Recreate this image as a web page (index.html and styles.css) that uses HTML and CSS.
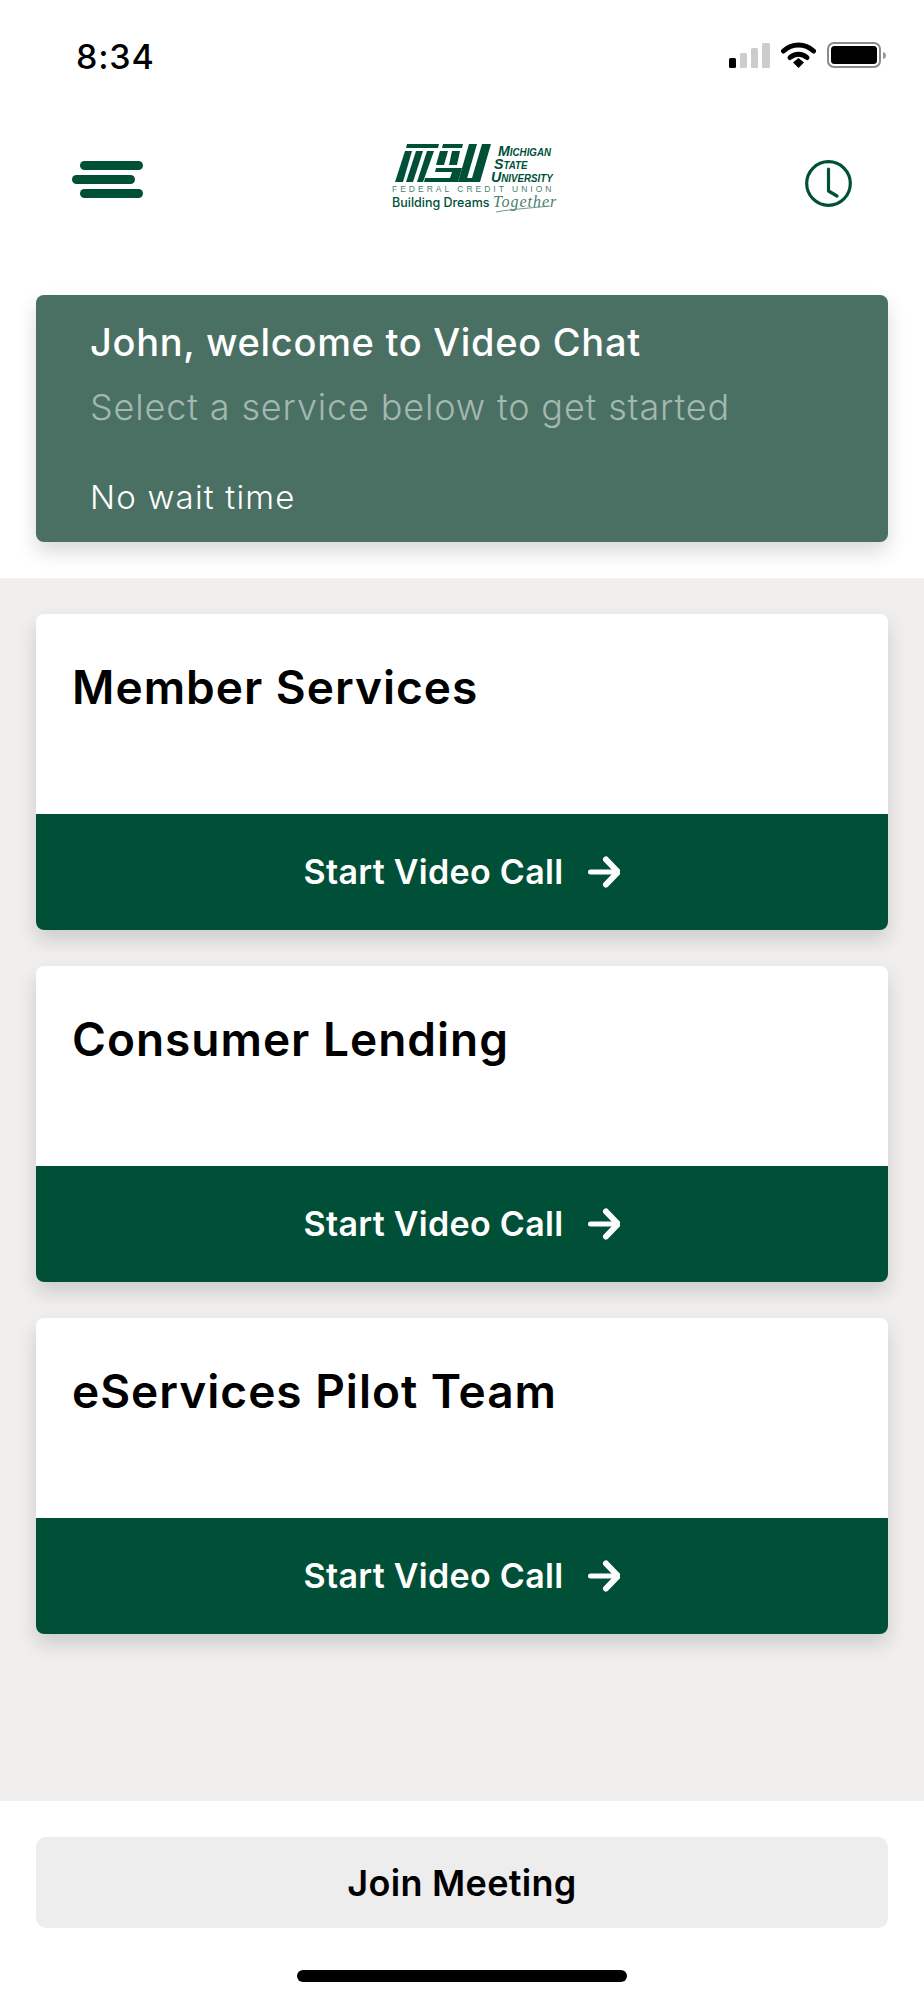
FILE: index.html
```html
<!DOCTYPE html>
<html lang="en">
<head>
    <meta charset="UTF-8">
    <meta name="viewport" content="width=device-width, initial-scale=1.0">
    <title>Video Chat</title>
    <link rel="stylesheet" href="styles.css">
</head>
<body>
    <div class="top">
        <div class="status-bar">
            <span class="time">8:34</span>
            <div class="status-icons">
                <svg width="41" height="26" viewBox="0 0 41 26">
                    <rect x="0" y="16" width="7" height="10" rx="1.5" fill="#000"/>
                    <rect x="11" y="11" width="7" height="15" rx="1.5" fill="#ccc"/>
                    <rect x="22" y="6" width="7" height="20" rx="1.5" fill="#ccc"/>
                    <rect x="33" y="1" width="8" height="25" rx="1.5" fill="#ccc"/>
                </svg>
                <svg class="wifi" width="35" height="26" viewBox="0 0 35 26">
                    <path d="M2.500 9C11 1 24 1 32.500 9" fill="none" stroke="#000" stroke-width="5" stroke-linecap="round"/>
                    <path d="M9 15.500C14 11 21 11 26 15.500" fill="none" stroke="#000" stroke-width="5" stroke-linecap="round"/>
                    <path d="M12 20.500L17.500 16L23 20.500L17.500 26Z" fill="#000"/>
                </svg>
                <svg class="battery" width="59" height="26" viewBox="0 0 59 26">
                    <rect x="1" y="1" width="52" height="24" rx="6" fill="none" stroke="#8a8a8a" stroke-width="2"/>
                    <rect x="4" y="4" width="46" height="18" rx="3.500" fill="#000"/>
                    <path d="M56 10C58 10.500 59 11.800 59 13.500C59 15.200 58 16.500 56 17Z" fill="#999"/>
                </svg>
            </div>
        </div>
        <div class="nav">
            <div class="menu-icon">
                <span class="menu-bar"></span>
                <span class="menu-bar shifted"></span>
                <span class="menu-bar"></span>
            </div>
            <svg class="logo" width="166" height="72" viewBox="0 0 166 72">
                <g fill="#005038">
                    <polygon points="15,0 47,0 46,4 14,4"/>
                    <polygon points="13,7 20,7 11,38 3,38"/>
                    <polygon points="24,7 31,7 21,38 14,38"/>
                    <polygon points="35,7 42,7 31,38 25,38"/>
                    <polygon points="51,0 71,0 70,4 50,4"/>
                    <polygon points="48,7 56,7 52,21 44,21"/>
                    <polygon points="44,24 70,24 66,38 32,38 33,34 58,34 60,28 43,28"/>
                    <polygon points="60,7 68,7 65,21 57,21"/>
                    <polygon points="77,0 85,0 74,38 66,38"/>
                    <polygon points="90,0 99,0 88,38 68,38 69,34 80,34"/>
                </g>
                <g fill="#005038" font-family="'Liberation Sans', sans-serif" font-weight="700" font-style="italic" font-size="15" font-variant="small-caps">
                    <text transform="translate(106 12) scale(.95 1)">Michigan</text>
                    <text transform="translate(102 24.500) scale(.95 1)">State</text>
                    <text transform="translate(99 37.500) scale(.95 1)">University</text>
                </g>
                <text x="0" y="48" fill="#4b7f6d" font-family="'Liberation Sans', sans-serif" font-size="8.500" letter-spacing="3">FEDERAL CREDIT UNION</text>
                <text x="0" y="63" fill="#005038" font-family="Inter, sans-serif" font-weight="500" font-size="12.500">Building Dreams</text>
                <text x="101" y="63" fill="#4b7f6d" font-family="'Liberation Serif', serif" font-style="italic" font-size="16" letter-spacing="1">Together</text>
                <path d="M104 68C120 65 140 64 158 62" fill="none" stroke="#4b7f6d" stroke-width="0.800"/>
            </svg>
            <svg class="clock" width="47" height="47" viewBox="0 0 47 47">
                <circle cx="23.500" cy="23.500" r="21.800" fill="none" stroke="#005038" stroke-width="3.200"/>
                <path d="M23.500 9V31L32 36" fill="none" stroke="#005038" stroke-width="3.200" stroke-linecap="round" stroke-linejoin="round"/>
            </svg>
        </div>
        <div class="welcome">
            <h1>John, welcome to Video Chat</h1>
            <p class="welcome-sub">Select a service below to get started</p>
            <p class="wait">No wait time</p>
        </div>
    </div>

    <div class="services">
        <div class="card">
            <h2>Member Services</h2>
            <div class="card-action">
                <span>Start Video Call</span>
                <svg class="arrow" width="32" height="32" viewBox="0 0 32 32"><path d="M2.500 16H29" fill="none" stroke="#fff" stroke-width="5" stroke-linecap="round"/><path d="M18 3.500L30 16L18 28.500" fill="none" stroke="#fff" stroke-width="6" stroke-linecap="round" stroke-linejoin="round"/></svg>
            </div>
        </div>
        <div class="card">
            <h2>Consumer Lending</h2>
            <div class="card-action">
                <span>Start Video Call</span>
                <svg class="arrow" width="32" height="32" viewBox="0 0 32 32"><path d="M2.500 16H29" fill="none" stroke="#fff" stroke-width="5" stroke-linecap="round"/><path d="M18 3.500L30 16L18 28.500" fill="none" stroke="#fff" stroke-width="6" stroke-linecap="round" stroke-linejoin="round"/></svg>
            </div>
        </div>
        <div class="card">
            <h2>eServices Pilot Team</h2>
            <div class="card-action">
                <span>Start Video Call</span>
                <svg class="arrow" width="32" height="32" viewBox="0 0 32 32"><path d="M2.500 16H29" fill="none" stroke="#fff" stroke-width="5" stroke-linecap="round"/><path d="M18 3.500L30 16L18 28.500" fill="none" stroke="#fff" stroke-width="6" stroke-linecap="round" stroke-linejoin="round"/></svg>
            </div>
        </div>
    </div>

    <div class="bottom">
        <div class="join">Join Meeting</div>
        <div class="home-bar"></div>
    </div>
</body>
</html>
```

FILE: styles.css
```css
* {
    box-sizing: border-box;
}
body {
    margin: 0;
    background: #fff;
    font-family: Inter, "Open Sans", sans-serif;
    color: #000;
}
h1, h2, p {
    margin: 0;
}
.top {
    height: 578px;
    padding: 42px 36px 0;
}
.status-bar {
    display: flex;
    justify-content: space-between;
    align-items: center;
    height: 26px;
    padding-left: 40px;
}
.time {
    font-size: 34px;
    font-weight: 500;
    line-height: 30px;
    letter-spacing: 0.8px;
    padding-top: 3px;
}
.status-icons {
    display: flex;
    align-items: flex-start;
    margin-right: 2px;
}
.wifi {
    margin-left: 11px;
}
.battery {
    margin-left: 11px;
}
.nav {
    display: flex;
    justify-content: space-between;
    align-items: flex-start;
    height: 227px;
    padding-top: 76px;
    padding-left: 36px;
    padding-right: 36px;
}
.menu-icon {
    display: flex;
    flex-direction: column;
    align-items: flex-end;
    gap: 5px;
    width: 71px;
    padding-top: 17px;
}
.menu-bar {
    display: block;
    width: 63px;
    height: 9px;
    border-radius: 5px;
    background: #005038;
}
.menu-bar.shifted {
    margin-right: 8px;
}
.logo {
    display: block;
    margin-left: 2px;
}
.clock {
    display: block;
    margin-top: 16px;
}
.welcome {
    height: 247px;
    padding: 21px 54px 0;
    border-radius: 8px;
    background: #4a7063;
    color: #fff;
    box-shadow: 0 10px 20px rgba(0, 0, 0, 0.15);
}
.welcome h1 {
    font-size: 38px;
    font-weight: 500;
    line-height: 52px;
    letter-spacing: 0.7px;
}
.welcome-sub {
    margin-top: 13px;
    font-size: 36px;
    font-weight: 300;
    line-height: 52px;
    color: #a3b8b0;
    letter-spacing: 0.85px;
}
.wait {
    margin-top: 40px;
    font-size: 33px;
    font-weight: 300;
    line-height: 48px;
    letter-spacing: 1.2px;
}
.services {
    display: flex;
    flex-direction: column;
    gap: 36px;
    height: 1223px;
    padding: 35.5px 36px 0;
    background: #f1efee;
}
.card {
    display: flex;
    flex-direction: column;
    height: 316px;
    border-radius: 8px;
    overflow: hidden;
    background: #fff;
    box-shadow: 0 10px 20px rgba(0, 0, 0, 0.15);
}
.card h2 {
    height: 200px;
    padding: 45px 36px 0;
    font-size: 46px;
    font-weight: 600;
    line-height: 56px;
    letter-spacing: 1px;
}
.card-action {
    display: flex;
    justify-content: center;
    align-items: center;
    gap: 25px;
    height: 116px;
    background: #005038;
    color: #fff;
    font-size: 34px;
    font-weight: 600;
    letter-spacing: 0.3px;
}
.arrow {
    display: block;
}
.bottom {
    height: 199px;
    padding: 36px 36px 0;
}
.join {
    display: flex;
    justify-content: center;
    align-items: center;
    height: 91px;
    border-radius: 10px;
    background: #eeeded;
    font-size: 36px;
    font-weight: 600;
    letter-spacing: 0.3px;
}
.home-bar {
    width: 330px;
    height: 12px;
    margin: 42px auto 0;
    border-radius: 6px;
    background: #000;
}
```
